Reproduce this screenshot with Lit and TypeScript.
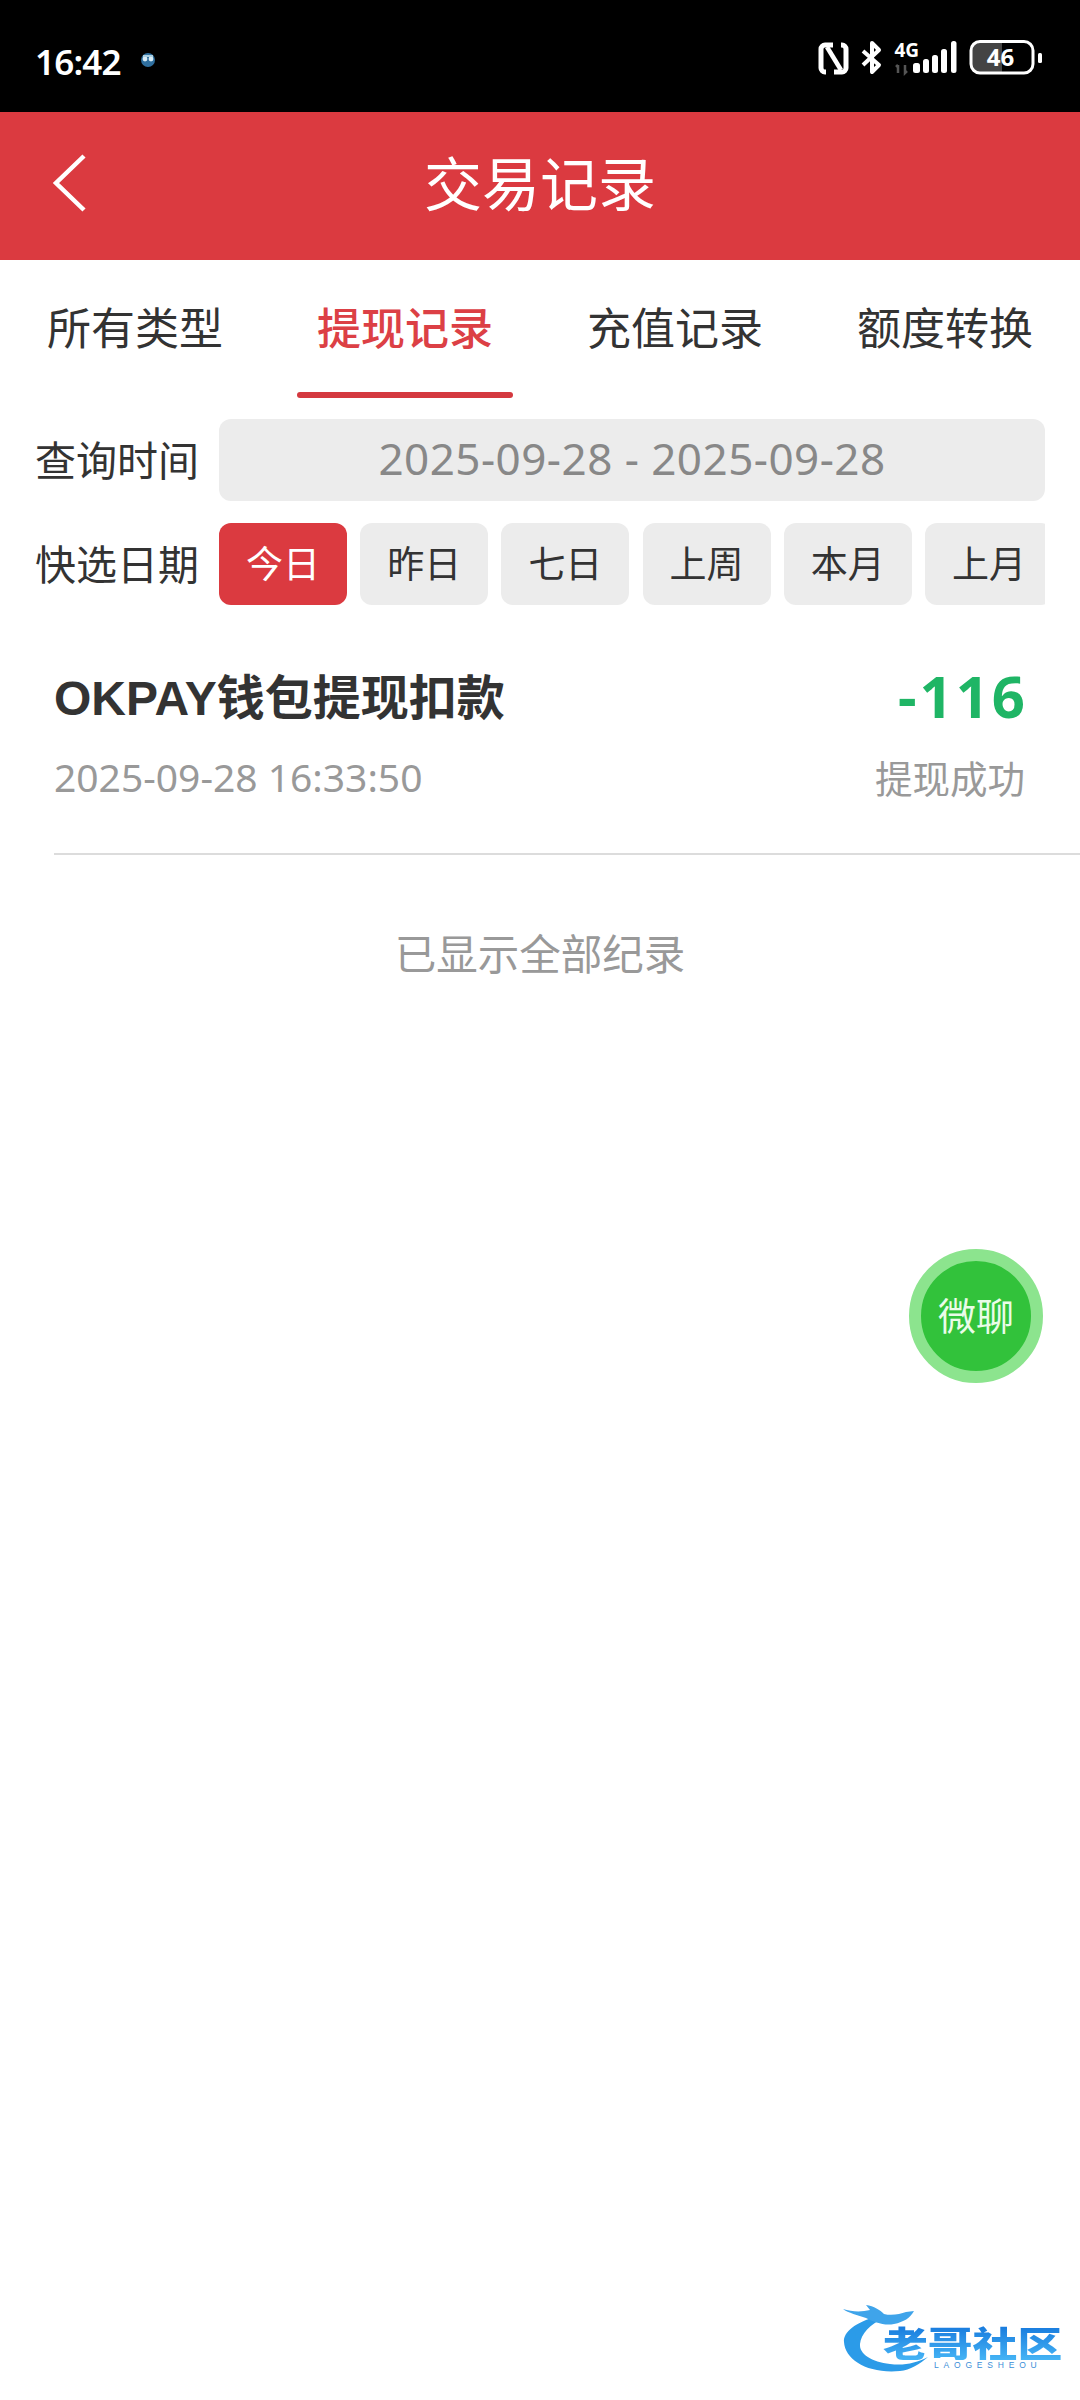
import { LitElement, html, css, svg } from "lit";
import { customElement } from "lit/decorators.js";

const TABS = ["所有类型", "提现记录", "充值记录", "额度转换"];
const CHIPS = ["今日", "昨日", "七日", "上周", "本月", "上月"];

@customElement("app-root")
export class AppRoot extends LitElement {
  static styles = css`
    :host {
      display: block;
      width: 1080px;
      height: 2400px;
      position: relative;
      overflow: hidden;
      background: #fff;
      color: #333;
      font-family: "Noto Sans CJK SC", "Noto Sans", sans-serif;
    }
    .status {
      height: 112px;
      background: #000;
      color: #fff;
      display: flex;
      align-items: center;
      padding: 8px 38px 0 35px;
      box-sizing: border-box;
    }
    .time {
      font-family: "Noto Sans", Roboto, sans-serif;
      font-size: 35px;
      font-weight: 600;
      letter-spacing: -0.8px;
      line-height: 40px;
      margin: 4px 19px 0 0;
    }
    .spacer { flex: 1; }
    .status svg { display: block; }
    .status svg.icons { margin-bottom: 6px; }
    .header {
      height: 148px;
      background: #db3a40;
      color: #fff;
      display: grid;
      grid-template-columns: 1fr auto 1fr;
      align-items: center;
      padding-bottom: 6px;
      box-sizing: border-box;
    }
    .header h1 {
      margin: 0 0 5px;
      font-size: 58px;
      font-weight: 400;
      line-height: 70px;
    }
    .back { display: block; margin-left: 50px; }
    .tabs {
      display: grid;
      grid-template-columns: repeat(4, 270px);
      height: 139px;
    }
    .tab {
      display: flex;
      flex-direction: column;
      align-items: center;
      font-size: 44px;
      line-height: 60px;
      padding-top: 36px;
      box-sizing: border-box;
      color: #333;
    }
    .tab .label { height: 96px; }
    .tab.active { color: #dc4045; font-weight: 500; }
    .tab .bar {
      width: 216px;
      height: 6px;
      border-radius: 3px;
    }
    .tab.active .bar { background: #d4393f; }
    .filters {
      display: flex;
      flex-direction: column;
      gap: 22px;
      padding: 20px 35px 0;
    }
    .row {
      display: flex;
      align-items: center;
      gap: 21px;
      height: 82px;
    }
    .row .name {
      width: 163px;
      flex: none;
      font-size: 41px;
      line-height: 60px;
      color: #333;
      padding-bottom: 5px;
      white-space: nowrap;
    }
    .range {
      flex: 1;
      height: 82px;
      border-radius: 12px;
      background: #ececec;
      color: #888;
      display: flex;
      align-items: center;
      justify-content: center;
      font-family: "Noto Sans", sans-serif;
      font-size: 44px;
      letter-spacing: 0.47px;
      padding-bottom: 4px;
      box-sizing: border-box;
    }
    .chips {
      flex: 1;
      min-width: 0;
      height: 82px;
      display: flex;
      gap: 13.2px;
      overflow: hidden;
    }
    .chip {
      flex: none;
      width: 128px;
      height: 82px;
      border-radius: 12px;
      background: #ececec;
      color: #333;
      font-size: 37px;
      display: flex;
      align-items: center;
      justify-content: center;
      padding-bottom: 5px;
      box-sizing: border-box;
    }
    .chip.on { background: #db3a40; color: #fff; }
    .record {
      margin: 47px 0 0 54px;
      padding-right: 55px;
      height: 201px;
      border-bottom: 2px solid #dcdcdc;
      display: flex;
      flex-direction: column;
    }
    .line {
      display: flex;
      justify-content: space-between;
      align-items: center;
    }
    .line.top { height: 88px; }
    .line.sub { height: 72px; }
    .title {
      font-size: 48px;
      font-weight: 700;
      color: #333;
      line-height: 70px;
    }
    .title .latin { font-family: "Liberation Sans", sans-serif; }
    .amount {
      font-family: "Noto Sans", sans-serif;
      font-size: 58px;
      font-weight: 700;
      letter-spacing: 3px;
      margin-right: -3px;
      color: #1fb565;
      line-height: 70px;
    }
    .date {
      font-family: "Noto Sans", sans-serif;
      font-size: 39px;
      color: #999;
    }
    .state { font-size: 37.5px; color: #999; }
    .end {
      text-align: center;
      font-size: 41.5px;
      line-height: 60px;
      color: #999;
      margin-top: 67px;
    }
    .fab {
      position: absolute;
      left: 909px;
      top: 1249px;
      width: 134px;
      height: 134px;
      box-sizing: border-box;
      border-radius: 50%;
      border: 12px solid #8ce48e;
      background: #32c23b;
      color: #eafce8;
      font-size: 38px;
      display: flex;
      align-items: center;
      justify-content: center;
      padding-bottom: 6px;
    }
    .logo {
      position: absolute;
      left: 838px;
      top: 2300px;
      width: 240px;
      height: 90px;
    }
    .logo .cn {
      position: absolute;
      left: 45px;
      top: 24px;
      font-size: 35px;
      font-weight: 900;
      line-height: 36px;
      color: transparent;
      background: linear-gradient(#1577dc, #45b4f5);
      -webkit-background-clip: text;
      background-clip: text;
      white-space: nowrap;
      transform-origin: left center;
      transform: scaleX(1.28);
    }
    .logo .en {
      position: absolute;
      left: 96px;
      top: 61px;
      font-family: "Liberation Sans", sans-serif;
      font-size: 8.5px;
      line-height: 8px;
      letter-spacing: 4.8px;
      color: #3d8fd8;
      white-space: nowrap;
    }
    .logo svg { position: absolute; left: 0; top: 0; }
  `;

  private statusIcons() {
    return html`<svg class="icons" width="224" height="46" viewBox="0 -6 224 46">
      ${svg`
        <path d="M15 5 H7 a4 4 0 0 0 -4 4 V28 a4 4 0 0 0 4 4 H8 M16 32 H24 a4 4 0 0 0 4 -4 V9 a4 4 0 0 0 -4 -4 H23"
          fill="none" stroke="#fff" stroke-width="5"/>
        <path d="M9 7 L23 30" fill="none" stroke="#fff" stroke-width="4.5"/>
        <path d="M45 11 L61 25 L54 32 V3 L61 10 L45 25" fill="none" stroke="#fff" stroke-width="4" stroke-linejoin="round"/>
      `}
      <text x="76.5" y="17" fill="#fff" font-family="Noto Sans" font-size="19" font-weight="700">4G</text>
      ${svg`
        <path d="M80 25 v8 M78 27 l2 -2 M87 25 v8 l2 -2" stroke="#555" stroke-width="2.5" fill="none"/>
        <rect x="95" y="23" width="7" height="10" rx="2.5" fill="#fff"/>
        <rect x="105" y="19" width="6" height="14" rx="2.5" fill="#fff"/>
        <rect x="114" y="15" width="6" height="18" rx="2.5" fill="#fff"/>
        <rect x="123" y="9" width="6" height="24" rx="2.5" fill="#fff"/>
        <rect x="133" y="1" width="5.5" height="32" rx="2.5" fill="#fff"/>
        <path d="M154 10 a8 8 0 0 1 8 -8 H184 V32 H162 a8 8 0 0 1 -8 -8 Z" fill="#444"/>
        <rect x="153" y="1.5" width="62" height="31.5" rx="9" fill="none" stroke="#fff" stroke-width="3"/>
        <rect x="220" y="13" width="4" height="10" rx="1.5" fill="#fff"/>
      `}
      <text x="182.5" y="26" text-anchor="middle" fill="#fff" font-family="Noto Sans" font-size="24" font-weight="700">46</text>
    </svg>`;
  }

  render() {
    return html`
      <div class="status">
        <span class="time">16:42</span>
        <svg width="16" height="16" viewBox="0 0 16 16">
          <circle cx="8" cy="8" r="7" fill="#2f6f9f"/>
          <circle cx="5" cy="7" r="2.4" fill="#d8ecf6"/>
          <circle cx="11" cy="7" r="2.4" fill="#d8ecf6"/>
          <path d="M3 3 h10 v2 H3 Z" fill="#a9cde0"/>
        </svg>
        <span class="spacer"></span>
        ${this.statusIcons()}
      </div>
      <div class="header">
        <svg class="back" width="40" height="60" viewBox="0 0 40 60">
          <path d="M34 3 L6 30 L34 57" fill="none" stroke="#fff" stroke-width="4.5"/>
        </svg>
        <h1>交易记录</h1>
        <span></span>
      </div>
      <div class="tabs">
        ${TABS.map(
          (t, i) => html`<div class="tab ${i === 1 ? "active" : ""}">
            <span class="label">${t}</span><span class="bar"></span>
          </div>`
        )}
      </div>
      <div class="filters">
        <div class="row">
          <span class="name">查询时间</span>
          <div class="range">2025-09-28 - 2025-09-28</div>
        </div>
        <div class="row">
          <span class="name">快选日期</span>
          <div class="chips">
            ${CHIPS.map(
              (c, i) => html`<div class="chip ${i === 0 ? "on" : ""}">${c}</div>`
            )}
          </div>
        </div>
      </div>
      <div class="record">
        <div class="line top">
          <span class="title"><span class="latin">OKPAY</span>钱包提现扣款</span>
          <span class="amount">-116</span>
        </div>
        <div class="line sub">
          <span class="date">2025-09-28 16:33:50</span>
          <span class="state">提现成功</span>
        </div>
      </div>
      <div class="end">已显示全部纪录</div>
      <div class="fab">微聊</div>
      <div class="logo">
        <svg width="240" height="90" viewBox="0 0 240 90">
          <path d="M40 16 C18 22 5 32 6 42 C7 60 30 74 62 71 C72 70 82 64 90 57 C78 63 66 66 52 64 C34 62 21 54 22 44 C23 34 32 24 46 18 Z" fill="#2b9be8"/>
          <path d="M5 9 C14 12 24 12 32 10 L28 5 C36 6 42 10 46 14 C54 16 62 14 68 12 L76 11 C72 18 66 22 56 24 C46 26 36 22 28 18 C20 15 10 13 5 9 Z" fill="#3fa4ea"/>
        </svg>
        <span class="cn">老哥社区</span>
        <span class="en">LAOGESHEOU</span>
      </div>
    `;
  }
}
